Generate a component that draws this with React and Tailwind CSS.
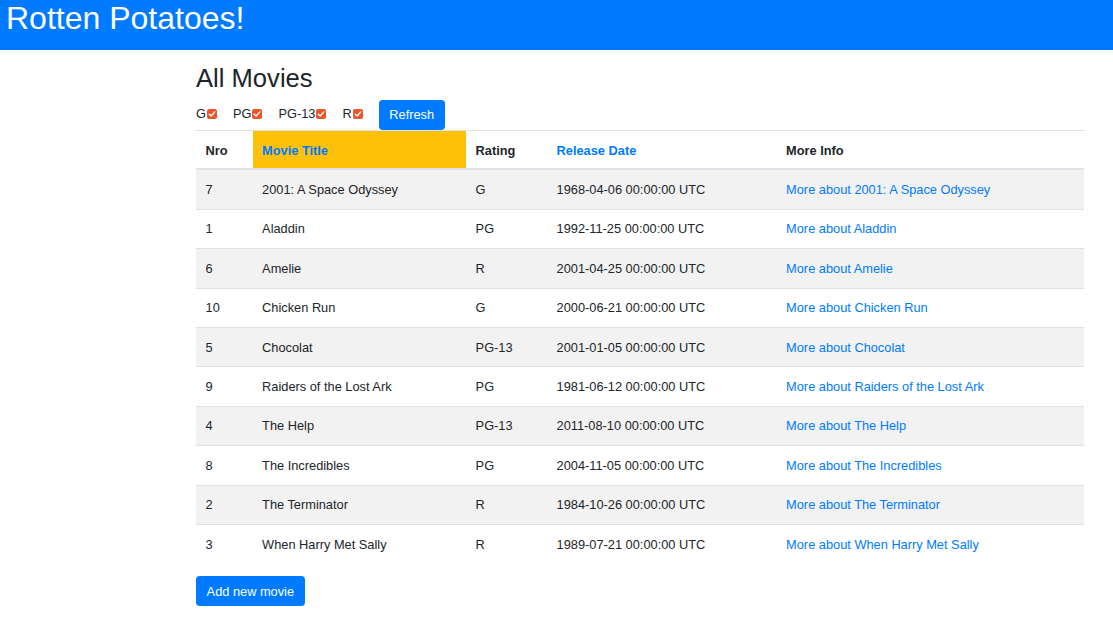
import React from "react";

const movies = [
  [7, "2001: A Space Odyssey", "G", "1968-04-06 00:00:00 UTC"],
  [1, "Aladdin", "PG", "1992-11-25 00:00:00 UTC"],
  [6, "Amelie", "R", "2001-04-25 00:00:00 UTC"],
  [10, "Chicken Run", "G", "2000-06-21 00:00:00 UTC"],
  [5, "Chocolat", "PG-13", "2001-01-05 00:00:00 UTC"],
  [9, "Raiders of the Lost Ark", "PG", "1981-06-12 00:00:00 UTC"],
  [4, "The Help", "PG-13", "2011-08-10 00:00:00 UTC"],
  [8, "The Incredibles", "PG", "2004-11-05 00:00:00 UTC"],
  [2, "The Terminator", "R", "1984-10-26 00:00:00 UTC"],
  [3, "When Harry Met Sally", "R", "1989-07-21 00:00:00 UTC"],
];

function Check() {
  return (
    <span className="ml-[1px] inline-flex h-[10px] w-[10px] items-center justify-center rounded-[2px] bg-[#e8562a]">
      <svg width="8" height="8" viewBox="0 0 8 8">
        <path d="M1.3 4.2 L3.2 6 L6.8 1.9" fill="none" stroke="white" strokeWidth="1.4" strokeLinecap="round" strokeLinejoin="round" />
      </svg>
    </span>
  );
}

export default function App() {
  const font = { fontFamily: '"Liberation Sans", Arial, sans-serif' };
  return (
    <div className="min-h-[617px] bg-white text-[#212529]" style={font}>
      <div className="h-[50px] bg-[#007bff] pl-[6px] pt-[2px]">
        <h1 className="text-[32px] leading-[32px] text-white">Rotten Potatoes!</h1>
      </div>
      <div className="ml-[196px] w-[888px]">
        <h2 className="mt-[12.8px] mb-[6.4px] text-[25.6px] leading-[30.72px] font-normal">All Movies</h2>
        <div className="flex items-start gap-[16px] text-[12.8px] leading-[19.2px]">
          {["G", "PG", "PG-13", "R"].map((r) => (
            <label key={r} className="mt-[4px] flex items-center">
              <span>{r}</span>
              <Check />
            </label>
          ))}
          <button className="rounded-[3.2px] border-[0.8px] border-[#007bff] bg-[#007bff] px-[9.6px] py-[4.3px] text-[12.8px] leading-[19.2px] text-white">
            Refresh
          </button>
        </div>
        <table className="mb-[12.8px] w-[888px] table-fixed border-collapse text-[12.8px] leading-[19.2px]">
          <colgroup>
            <col className="w-[56.5px]" />
            <col className="w-[213.5px]" />
            <col className="w-[81px]" />
            <col className="w-[229.5px]" />
            <col className="w-[307.5px]" />
          </colgroup>
          <thead>
            <tr>
              <th className="border-t border-b-2 border-[#dee2e6] px-[9.6px] pt-[9.9px] pb-[8.5px] text-left font-bold">Nro</th>
              <th className="border-t border-b-2 border-[#dee2e6] bg-[#ffc107] px-[9.6px] pt-[9.9px] pb-[8.5px] text-left font-bold text-[#007bff]">Movie Title</th>
              <th className="border-t border-b-2 border-[#dee2e6] px-[9.6px] pt-[9.9px] pb-[8.5px] text-left font-bold">Rating</th>
              <th className="border-t border-b-2 border-[#dee2e6] px-[9.6px] pt-[9.9px] pb-[8.5px] text-left font-bold text-[#007bff]">Release Date</th>
              <th className="border-t border-b-2 border-[#dee2e6] px-[9.6px] pt-[9.9px] pb-[8.5px] text-left font-bold">More Info</th>
            </tr>
          </thead>
          <tbody>
            {movies.map(([id, title, rating, date], i) => (
              <tr key={id} className={i % 2 === 0 ? "bg-[#f2f2f2]" : "bg-white"}>
                <td className="border-t border-[#dee2e6] px-[9.6px] py-[9.62px]">{id}</td>
                <td className="border-t border-[#dee2e6] px-[9.6px] py-[9.62px]">{title}</td>
                <td className="border-t border-[#dee2e6] px-[9.6px] py-[9.62px]">{rating}</td>
                <td className="border-t border-[#dee2e6] px-[9.6px] py-[9.62px]">{date}</td>
                <td className="border-t border-[#dee2e6] px-[9.6px] py-[9.62px] text-[#007bff]">More about {title}</td>
              </tr>
            ))}
          </tbody>
        </table>
        <button className="rounded-[3.2px] border-[0.8px] border-[#007bff] bg-[#007bff] px-[9.6px] py-[4.3px] text-[12.8px] leading-[19.2px] text-white">
          Add new movie
        </button>
      </div>
    </div>
  );
}
